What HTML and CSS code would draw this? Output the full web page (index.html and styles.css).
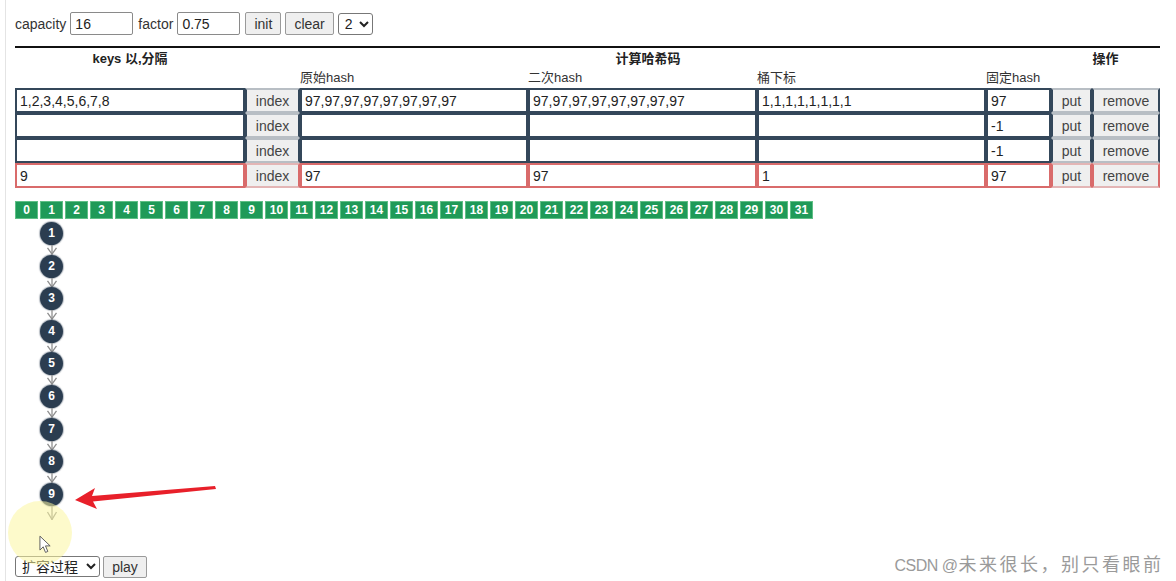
FILE: index.html
```html
<!DOCTYPE html>
<html lang="zh">
<head>
<meta charset="utf-8">
<title>hash table</title>
<link rel="stylesheet" href="styles.css">
</head>
<body>
<div class="page">
  <div class="toolbar">
    <span>capacity</span><input class="tb-input" value="16"><span>factor</span><input class="tb-input" value="0.75"><button class="btn btn-init">init</button><button class="btn">clear</button><select class="sel"><option>2</option></select>
  </div>

  <div class="hash-table">
    <div class="th th-keys">keys 以,分隔</div>
    <div class="th th-calc">计算哈希码</div>
    <div class="th th-op">操作</div>

    <div class="sub sub-empty2"></div>
    <div class="sub">原始hash</div>
    <div class="sub">二次hash</div>
    <div class="sub">桶下标</div>
    <div class="sub">固定hash</div>
    <div class="sub sub-empty2b"></div>

    <input class="cell" value="1,2,3,4,5,6,7,8"><button class="cell cbtn">index</button><input class="cell" value="97,97,97,97,97,97,97,97"><input class="cell" value="97,97,97,97,97,97,97,97"><input class="cell" value="1,1,1,1,1,1,1,1"><input class="cell" value="97"><button class="cell cbtn">put</button><button class="cell cbtn">remove</button>

    <input class="cell" value=""><button class="cell cbtn">index</button><input class="cell" value=""><input class="cell" value=""><input class="cell" value=""><input class="cell" value="-1"><button class="cell cbtn">put</button><button class="cell cbtn">remove</button>

    <input class="cell" value=""><button class="cell cbtn">index</button><input class="cell" value=""><input class="cell" value=""><input class="cell" value=""><input class="cell" value="-1"><button class="cell cbtn">put</button><button class="cell cbtn">remove</button>

    <input class="cell red" value="9"><button class="cell cbtn red">index</button><input class="cell red" value="97"><input class="cell red" value="97"><input class="cell red" value="1"><input class="cell red" value="97"><button class="cell cbtn red">put</button><button class="cell cbtn red">remove</button>
  </div>

  <div class="buckets">
    <span class="bk">0</span><span class="bk">1</span><span class="bk">2</span><span class="bk">3</span><span class="bk">4</span><span class="bk">5</span><span class="bk">6</span><span class="bk">7</span><span class="bk">8</span><span class="bk">9</span><span class="bk">10</span><span class="bk">11</span><span class="bk">12</span><span class="bk">13</span><span class="bk">14</span><span class="bk">15</span><span class="bk">16</span><span class="bk">17</span><span class="bk">18</span><span class="bk">19</span><span class="bk">20</span><span class="bk">21</span><span class="bk">22</span><span class="bk">23</span><span class="bk">24</span><span class="bk">25</span><span class="bk">26</span><span class="bk">27</span><span class="bk">28</span><span class="bk">29</span><span class="bk">30</span><span class="bk">31</span>
  </div>

  <div class="chain">
    <div class="node">1</div>
    <svg class="link" viewBox="0 0 12 10" preserveAspectRatio="none"><line x1="6" y1="0" x2="6" y2="10"/><polyline points="1.5,3 6,9.5 10.5,3"/></svg>
    <div class="node">2</div>
    <svg class="link" viewBox="0 0 12 10" preserveAspectRatio="none"><line x1="6" y1="0" x2="6" y2="10"/><polyline points="1.5,3 6,9.5 10.5,3"/></svg>
    <div class="node">3</div>
    <svg class="link" viewBox="0 0 12 10" preserveAspectRatio="none"><line x1="6" y1="0" x2="6" y2="10"/><polyline points="1.5,3 6,9.5 10.5,3"/></svg>
    <div class="node">4</div>
    <svg class="link" viewBox="0 0 12 10" preserveAspectRatio="none"><line x1="6" y1="0" x2="6" y2="10"/><polyline points="1.5,3 6,9.5 10.5,3"/></svg>
    <div class="node">5</div>
    <svg class="link" viewBox="0 0 12 10" preserveAspectRatio="none"><line x1="6" y1="0" x2="6" y2="10"/><polyline points="1.5,3 6,9.5 10.5,3"/></svg>
    <div class="node">6</div>
    <svg class="link" viewBox="0 0 12 10" preserveAspectRatio="none"><line x1="6" y1="0" x2="6" y2="10"/><polyline points="1.5,3 6,9.5 10.5,3"/></svg>
    <div class="node">7</div>
    <svg class="link" viewBox="0 0 12 10" preserveAspectRatio="none"><line x1="6" y1="0" x2="6" y2="10"/><polyline points="1.5,3 6,9.5 10.5,3"/></svg>
    <div class="node">8</div>
    <svg class="link" viewBox="0 0 12 10" preserveAspectRatio="none"><line x1="6" y1="0" x2="6" y2="10"/><polyline points="1.5,3 6,9.5 10.5,3"/></svg>
    <div class="node">9</div>
    <svg class="link link-last" viewBox="0 0 12 14" preserveAspectRatio="none"><line x1="6" y1="0" x2="6" y2="14"/><polyline points="1.5,6 6,13.5 10.5,6"/></svg>
  </div>

  <div class="bottom">
    <select class="sel sel-wide"><option>扩容过程</option></select><button class="btn btn-play">play</button>
  </div>
</div>

<div class="highlight"></div>
<svg class="cursor" viewBox="0 0 14 20"><path d="M1 1 L1 16 L4.5 12.5 L7 18.5 L9.5 17.5 L7 11.5 L12 11.5 Z"/></svg>
<svg class="red-arrow" viewBox="0 0 142 24"><polygon points="0,14 20,2 17,10 140,0 141,3 18,15.5 22,23"/></svg>
<div class="watermark"><span class="wm-latin">CSDN @</span><span class="wm-cjk">未来很长，别只看眼前</span></div>
</body>
</html>
```

FILE: styles.css
```css
* { box-sizing: border-box; }

html, body {
  margin: 0;
  padding: 0;
  background: #fff;
}

body {
  width: 1176px;
  height: 581px;
  overflow: hidden;
  position: relative;
  font-family: "Liberation Sans", Arial, "Noto Sans CJK SC", sans-serif;
  font-size: 14px;
  color: #222;
}

.page {
  margin-left: 5px;
  border-left: 1px solid #e4e4e4;
  height: 581px;
  padding: 12px 0 0 9px;
}

.toolbar {
  display: flex;
  align-items: center;
  height: 23px;
  color: #333;
}

.toolbar span { margin-right: 4px; }

.tb-input {
  width: 63px;
  height: 23px;
  border: 1px solid #8a8a8a;
  border-radius: 2px;
  padding: 0 4px;
  font: inherit;
  color: #222;
  margin-right: 5px;
}

.btn {
  height: 23px;
  border: 1px solid #9a9a9a;
  border-radius: 2px;
  background: #efefef;
  font: inherit;
  color: #333;
  padding: 0 8px;
  margin-right: 4px;
}
.btn-init { width: 36px; padding: 0; }

.sel {
  height: 22px;
  border: 1px solid #777;
  border-radius: 3px;
  background: #fff;
  font: inherit;
  color: #222;
  width: 35px;
  padding: 0 2px;
}

.hash-table {
  margin-top: 11px;
  width: 1145px;
  border-top: 2px solid #111;
  display: grid;
  grid-template-columns: 230px 55px 228px 229px 229px 65px 41px 68px;
  grid-template-rows: 21px 19px 25px 25px 25px 25px;
}

.th {
  font-weight: bold;
  font-size: 13px;
  text-align: center;
  line-height: 16px;
  padding-top: 3px;
}
.th-keys { grid-column: 1 / 2; }
.th-calc { grid-column: 2 / 7; }
.th-op { grid-column: 7 / 9; }

.sub {
  font-size: 13px;
  line-height: 18px;
  color: #333;
}
.sub-empty2 { grid-column: 1 / 3; }
.sub-empty2b { grid-column: 7 / 9; }

.cell {
  width: 100%;
  height: 25px;
  border: 2px solid #34475a;
  margin: 0;
  font: inherit;
  color: #222;
  padding: 0 3px;
  background: #fff;
}

.cbtn {
  background: #efefef;
  color: #444;
  border-top-color: #b8bec4;
  border-bottom-color: #b8bec4;
  padding: 0;
  text-align: center;
}

.cell.red { border-color: #d96b6b; }
.cbtn.red { border-top-color: #e3b5b5; border-bottom-color: #e3b5b5; }

.buckets {
  margin-top: 13px;
  display: flex;
  gap: 2px;
}

.bk {
  width: 23px;
  height: 18px;
  background: #1f9a58;
  border: 1px solid #5fbf86;
  color: #fff;
  font-weight: bold;
  font-size: 12px;
  text-align: center;
  line-height: 16px;
}

.chain {
  margin-top: 3px;
  margin-left: 25px;
  width: 23px;
  display: flex;
  flex-direction: column;
  align-items: center;
}

.node {
  width: 23px;
  height: 23px;
  border-radius: 50%;
  background: #2b3d50;
  color: #fff;
  font-weight: bold;
  font-size: 12px;
  text-align: center;
  line-height: 23px;
  box-shadow: 0 0 1px 1px rgba(43, 61, 80, 0.35);
}

.link {
  width: 12px;
  height: 9.6px;
  display: block;
}
.link line, .link polyline {
  stroke: #8f8f8f;
  stroke-width: 1.3;
  fill: none;
}
.link-last { height: 14px; }

.bottom {
  margin-top: 36px;
  display: flex;
  align-items: center;
}

.sel-wide {
  width: 85px;
  height: 21px;
  margin-right: 3px;
}

.btn-play {
  height: 22px;
  width: 44px;
  padding: 0;
}

.highlight {
  position: absolute;
  left: 8px;
  top: 501px;
  width: 64px;
  height: 64px;
  border-radius: 50%;
  background: rgba(252, 246, 160, 0.55);
  pointer-events: none;
}

.cursor {
  position: absolute;
  left: 39px;
  top: 535px;
  width: 13px;
  height: 19px;
}
.cursor path {
  fill: #fff;
  stroke: #555;
  stroke-width: 1;
}

.red-arrow {
  position: absolute;
  left: 75px;
  top: 486px;
  width: 142px;
  height: 24px;
}
.red-arrow polygon { fill: #e8202a; }

.watermark {
  position: absolute;
  right: 15px;
  top: 550px;
  font-family: "Liberation Sans", "Noto Sans CJK SC", sans-serif;
  color: #9a9a9a;
  white-space: nowrap;
  display: flex;
  align-items: baseline;
}
.wm-latin {
  font-size: 16px;
  letter-spacing: -0.5px;
  margin-right: 1px;
}
.wm-cjk {
  font-size: 18px;
  letter-spacing: 2.5px;
  margin-right: -2.5px;
}
```
